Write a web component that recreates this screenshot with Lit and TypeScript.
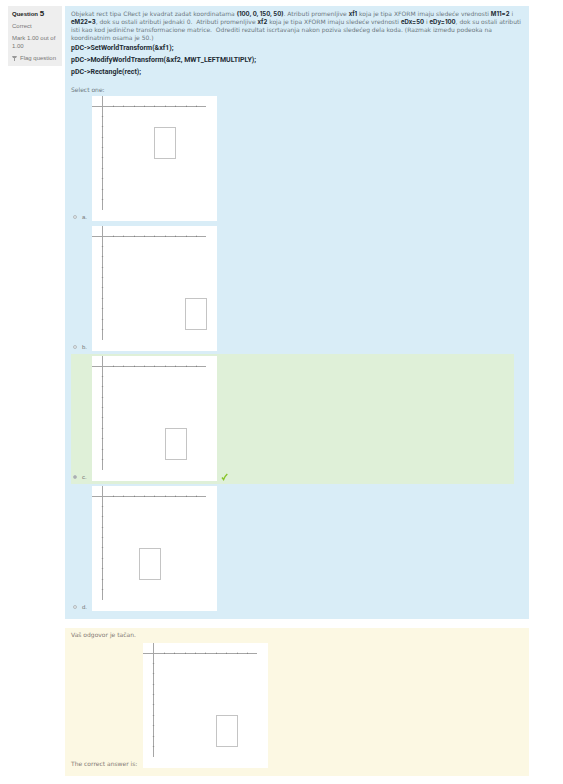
import { LitElement, html, css, svg } from "lit";
import { customElement, property } from "lit/decorators.js";

const TICKS = [21, 31, 42, 52, 62, 73, 83, 94, 104];

@customElement("axis-plot")
class AxisPlot extends LitElement {
  @property({ type: Number }) x = 0;
  @property({ type: Number }) y = 0;
  @property() label = "";

  static styles = css`
    :host { display: block; width: 125px; height: 125px; background: #fff; }
    svg { display: block; }
    .axis { fill: #a6a6a6; }
    .tick { fill: #858585; }
    .box { fill: none; stroke: #c4c4c4; stroke-width: 1; }
  `;

  render() {
    return html`<svg width="125" height="125" viewBox="0 0 125 125" role="img" aria-label=${this.label}>
      <rect class="axis" x="10" y="0" width="1" height="114"></rect>
      <rect class="axis" x="0" y="10" width="114" height="1"></rect>
      ${TICKS.map((t) => svg`
        <rect class="tick" x=${t} y="10" width="1" height="1"></rect>
        <rect class="axis" x=${t} y="9" width="1" height="1" opacity="0.4"></rect>
        <rect class="tick" x="10" y=${t - 1} width="1" height="1"></rect>
        <rect class="axis" x="9" y=${t - 1} width="3" height="1" opacity="0.2"></rect>`)}
      <rect class="box" x=${this.x + 0.5} y=${this.y + 0.5} width="21" height="31"></rect>
    </svg>`;
  }
}

interface Choice { key: string; x: number; y: number; correct?: boolean }

const CHOICES: Choice[] = [
  { key: "a", x: 62, y: 31 },
  { key: "b", x: 93, y: 72 },
  { key: "c", x: 73, y: 72, correct: true },
  { key: "d", x: 47, y: 62 },
];

@customElement("app-root")
class AppRoot extends LitElement {
  static styles = css`
    :host {
      display: block;
      font: 6px/8px "DejaVu Sans", Arial, sans-serif;
      color: #6c7880;
      background: #fff;
    }
    * { box-sizing: border-box; }
    .page { display: flex; align-items: flex-start; gap: 3px; padding: 6px 34px 8px 8px; }
    .info {
      flex: none;
      display: flex;
      flex-direction: column;
      gap: 4px;
      width: 54px;
      padding: 4px;
      background: #eee;
      color: #777;
      font-family: "Liberation Sans", Arial, sans-serif;
    }
    .info h3 { margin: 0; font-size: 6px; line-height: 8px; color: #222; }
    .number { font-size: 8px; }
    .flag {
      display: flex;
      align-items: center;
      gap: 3px;
      padding: 0;
      border: 0;
      background: none;
      font: inherit;
      line-height: 8px;
      color: inherit;
      white-space: nowrap;
    }
    .content { flex: 1; min-width: 0; display: flex; flex-direction: column; gap: 9px; }
    .question { padding: 4px 0 5px 6px; background: #d9edf7; }
    .question p { margin: 0; }
    b { color: #1d2b33; font-family: Inter, sans-serif; }
    .code { display: flex; flex-direction: column; gap: 4px; padding: 2px 0 10px; }
    .code b { font-family: Roboto, sans-serif; font-size: 7px; }
    .choices { margin: 0 15px 0 0; padding: 0; border: 0; }
    .choices legend { padding: 0; }
    .choice { display: flex; align-items: flex-end; padding: 2px 0 3px 2px; }
    .correct { background: #dff0d8; }
    .radio {
      appearance: none;
      width: 4px;
      height: 4px;
      margin: 0 5px 2px 0;
      border: 1px solid #b4bcc0;
      border-radius: 50%;
      background: #e4e8ea;
    }
    .radio:checked { background: #aaa; }
    .choice label { display: flex; align-items: flex-end; }
    .key { width: 10px; font: 6px/7px "Liberation Sans", Arial, sans-serif; color: #777; }
    .tick { margin-left: 4px; }
    .feedback { padding: 3px 6px 8px; background: #fcf8e3; color: #857b76; }
    .feedback p { margin: 0; }
    .answer { display: flex; align-items: flex-end; gap: 6px; padding-top: 4px; }
    .answer p { flex: none; }
  `;

  render() {
    return html`<main class="page">
      <aside class="info">
        <h3>Question <span class="number">5</span></h3>
        <div>Correct</div>
        <div>Mark 1.00 out of 1.00</div>
        <button class="flag" type="button">
          <svg width="5" height="6" viewBox="0 0 5 6" aria-hidden="true"><path d="M0 1h5L4 3H3v3H2V3H1z" fill="#999"></path></svg>
          Flag question
        </button>
      </aside>
      <div class="content">
        <section class="question">
          <p>Objekat rect tipa CRect je kvadrat zadat koordinatama <b>(100, 0, 150, 50)</b>. Atributi promenljive <b>xf1</b> koja je tipa XFORM imaju sledeće vrednosti <b>M11=2</b> i<br><b>eM22=3</b>, dok su ostali atributi jednaki 0. &nbsp;Atributi promenljive <b>xf2</b> koja je tipa XFORM imaju sledeće vrednosti <b>eDx=50</b> i <b>eDy=100</b>, dok su ostali atributi<br>isti kao kod jedinične transformacione matrice. &nbsp;Odrediti rezultat iscrtavanja nakon poziva sledećeg dela koda. (Razmak između podeoka na<br>koordinatnim osama je 50.)</p>
          <div class="code">
            <b>pDC-&gt;SetWorldTransform(&amp;xf1);</b>
            <b>pDC-&gt;ModifyWorldTransform(&amp;xf2, MWT_LEFTMULTIPLY);</b>
            <b>pDC-&gt;Rectangle(rect);</b>
          </div>
          <fieldset class="choices">
            <legend>Select one:</legend>
            ${CHOICES.map((c) => html`
              <div class="choice ${c.correct ? "correct" : ""}">
                <input class="radio" type="radio" name="answer" id=${c.key} ?checked=${c.correct}>
                <label for=${c.key}><span class="key">${c.key}.</span><axis-plot .x=${c.x} .y=${c.y} label="Plot ${c.key}"></axis-plot></label>
                ${c.correct ? html`<svg class="tick" width="7" height="8" viewBox="0 0 7 8" role="img" aria-label="Correct"><path d="M1 4.5L2.600 6.500Q4 3 6.300 1" fill="none" stroke="#8ac52c" stroke-width="1.500"></path></svg>` : ""}
              </div>`)}
          </fieldset>
        </section>
        <section class="feedback">
          <p>Vaš odgovor je tačan.</p>
          <div class="answer">
            <p>The correct answer is:</p>
            <axis-plot .x=${73} .y=${72} label="Correct plot"></axis-plot>
          </div>
        </section>
      </div>
    </main>`;
  }
}
